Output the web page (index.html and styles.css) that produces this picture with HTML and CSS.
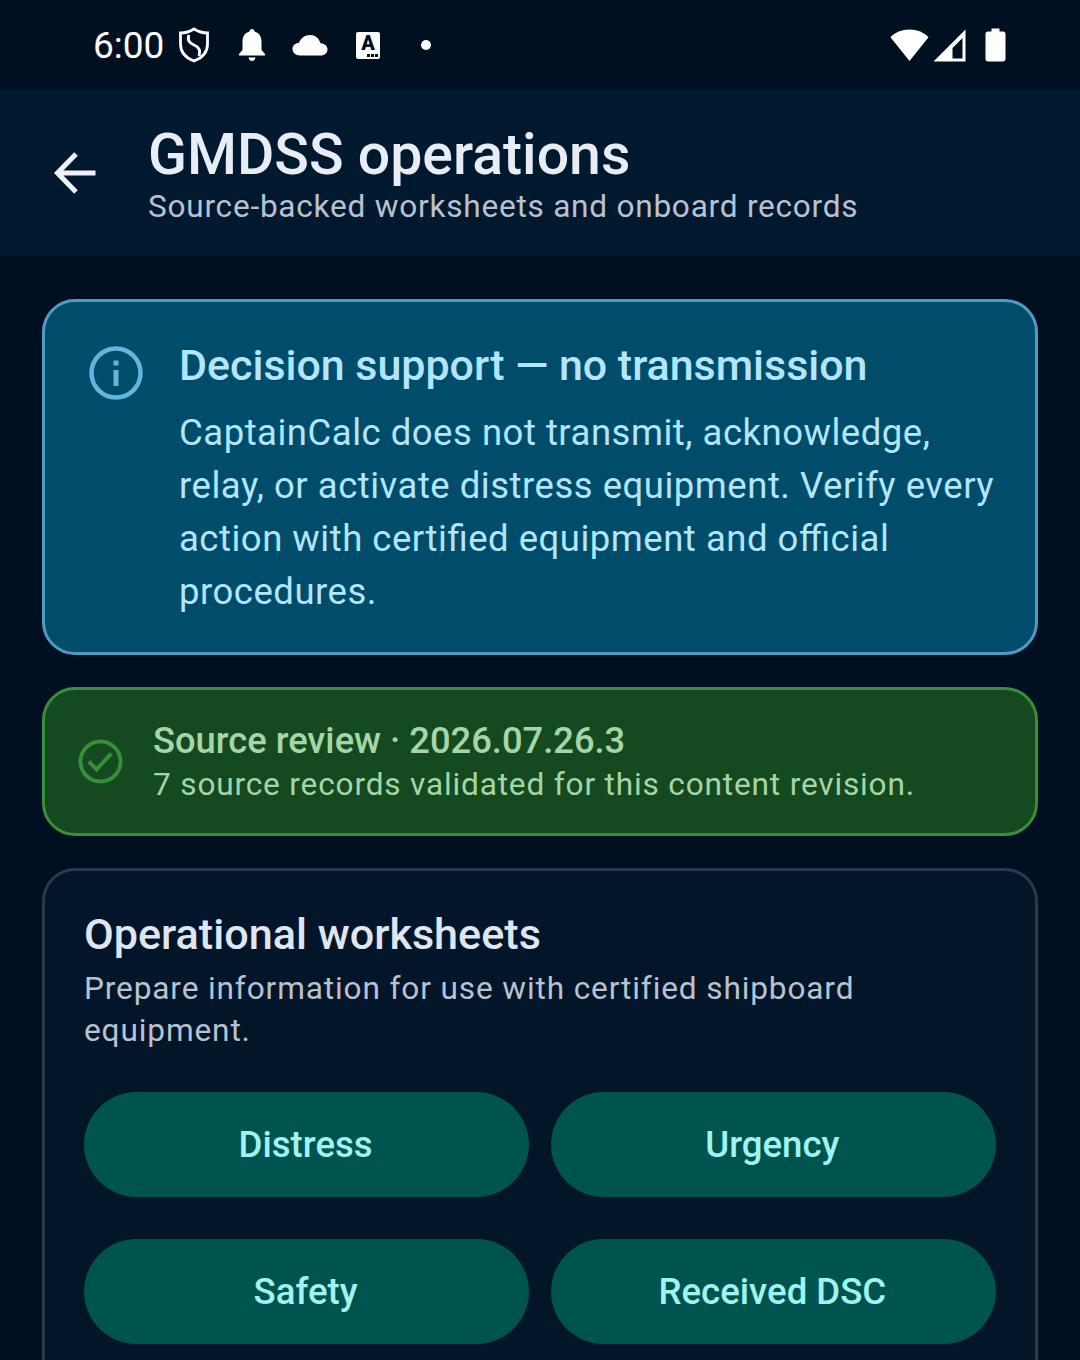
FILE: index.html
```html
<!DOCTYPE html>
<html lang="en">
<head>
    <meta charset="UTF-8">
    <meta name="viewport" content="width=device-width, initial-scale=1">
    <title>GMDSS operations</title>
    <link rel="stylesheet" href="styles.css">
</head>
<body>
    <div id="root">
        <div class="status-bar">
            <div class="status-left">
                <span class="clock">6:00</span>
                <svg class="ic-shield" width="30" height="36" viewBox="0 0 30 36">
                    <path d="M15 2 C19 4.500 23 6 28.500 6 V17 C28.500 25 23 31 15 34 C7 31 1.500 25 1.500 17 V6 C7 6 11 4.500 15 2 Z" fill="none" stroke="#fff" stroke-width="2.800"/>
                    <path d="M10 8 C8 13 10 16 15 18 C20 20 22 23 20 29" fill="none" stroke="#fff" stroke-width="2.800"/>
                </svg>
                <svg class="ic-bell" width="28" height="34" viewBox="0 0 28 34">
                    <path d="M14 1 C15.500 1 16.500 2 16.500 3.600 C21.500 5 23.500 9 23.500 14 V22 L27 26 V27.500 H1 V26 L4.500 22 V14 C4.500 9 6.500 5 11.500 3.600 C11.500 2 12.500 1 14 1 Z" fill="#fff"/>
                    <path d="M10.500 29.500 H17.500 C17 32 15.500 33 14 33 C12.500 33 11 32 10.500 29.500 Z" fill="#fff"/>
                </svg>
                <svg class="ic-cloud" width="36" height="22" viewBox="0 0 36 22">
                    <path d="M8 21.500 C3.500 21.500 0.500 18.500 0.500 15 C0.500 11.500 3.500 9 7 8.800 C9 4 13 1 18 1 C23 1 27 4 28.500 9.300 C32.500 9.500 35.500 12 35.500 15.500 C35.500 19 32.500 21.500 29 21.500 Z" fill="#fff"/>
                </svg>
                <span class="ic-a">
                    <span class="ic-a-letter">A</span>
                    <span class="ic-a-dots"><i></i><i></i><i></i></span>
                </span>
                <span class="dot"></span>
            </div>
            <div class="status-right">
                <svg class="ic-wifi" width="39" height="34" viewBox="0 0 40 34">
                    <path d="M0.500 9 C5 4 12 1 20 1 C28 1 35 4 39.500 9 L20 33.500 Z" fill="#fff"/>
                </svg>
                <svg width="33" height="33" viewBox="0 0 33 33">
                    <path fill-rule="evenodd" d="M32.500 0.500 V32.500 H0.500 Z M29.500 9 L19.500 19 V29.500 H29.500 Z" fill="#fff"/>
                </svg>
                <svg class="ic-battery" width="21" height="34" viewBox="0 0 21 34">
                    <path d="M6.500 0.500 H14.500 V3.500 H18 C19.500 3.500 20.500 4.500 20.500 6 V31 C20.500 32.500 19.500 33.500 18 33.500 H3 C1.500 33.500 0.500 32.500 0.500 31 V6 C0.500 4.500 1.500 3.500 3 3.500 H6.500 Z" fill="#fff"/>
                </svg>
            </div>
        </div>

        <header class="app-bar">
            <svg class="back" width="44" height="42" viewBox="0 0 44 42">
                <path d="M42.500 21 H4.500 M23 2 L4.500 21 L23 40" fill="none" stroke="#eef2fa" stroke-width="5"/>
            </svg>
            <div class="app-bar-text">
                <h1>GMDSS operations</h1>
                <p>Source-backed worksheets and onboard records</p>
            </div>
        </header>

        <main class="content">
            <section class="card notice">
                <svg class="ic-info" width="54" height="54" viewBox="0 0 54 54">
                    <circle cx="27" cy="27" r="24.500" fill="none" stroke="#62b5de" stroke-width="4.500"/>
                    <rect x="24.500" y="14.500" width="5" height="5" fill="#62b5de"/>
                    <rect x="24.500" y="24" width="5" height="16" fill="#62b5de"/>
                </svg>
                <div>
                    <h2>Decision support — no transmission</h2>
                    <p>CaptainCalc does not transmit, acknowledge, relay, or activate distress equipment. Verify every action with certified equipment and official procedures.</p>
                </div>
            </section>

            <section class="card review">
                <svg class="ic-check" width="45" height="45" viewBox="0 0 46 46">
                    <circle cx="23" cy="23" r="20.500" fill="none" stroke="#388e3c" stroke-width="4"/>
                    <path d="M11 23 L19 31 L34 15" fill="none" stroke="#388e3c" stroke-width="4"/>
                </svg>
                <div>
                    <h3>Source review · 2026.07.26.3</h3>
                    <p>7 source records validated for this content revision.</p>
                </div>
            </section>

            <section class="card worksheets">
                <h2>Operational worksheets</h2>
                <p>Prepare information for use with certified shipboard equipment.</p>
                <div class="btn-grid">
                    <button>Distress</button>
                    <button>Urgency</button>
                    <button>Safety</button>
                    <button>Received DSC</button>
                </div>
            </section>
        </main>
    </div>
</body>
</html>
```

FILE: styles.css
```css
* {
    margin: 0;
    padding: 0;
    box-sizing: border-box;
}

html {
    font-family: Roboto, sans-serif;
}

body {
    background-color: #001021;
}

#root {
    width: 1080px;
    height: 1360px;
    overflow: hidden;
}

.status-bar {
    display: flex;
    justify-content: space-between;
    align-items: center;
    height: 90px;
    padding: 0 74px 0 93px;
    color: white;
}

.status-left {
    display: flex;
    align-items: center;
}

.clock {
    font-size: 37px;
    width: 86px;
}

.ic-shield {
    margin-right: 29px;
}

.ic-bell {
    margin-right: 26px;
}

.ic-cloud {
    margin-right: 28px;
}

.ic-a {
    display: flex;
    flex-direction: column;
    align-items: center;
    width: 24px;
    height: 27px;
    margin-right: 41px;
    background-color: white;
    border-radius: 2px;
    color: #001021;
    font-size: 20px;
    font-weight: 900;
}

.ic-a-letter {
    height: 19px;
    margin-top: 2px;
    line-height: 19px;
}

.ic-a-dots {
    display: flex;
    gap: 1px;
    align-self: flex-end;
    margin: 1px 2px 0 0;
}

.ic-a-dots i {
    width: 3px;
    height: 3px;
    background-color: #001021;
}

.dot {
    width: 10px;
    height: 10px;
    border-radius: 50%;
    background-color: white;
}

.status-right {
    display: flex;
    align-items: center;
    gap: 4px;
}

.ic-battery {
    margin-left: 15px;
}

.app-bar {
    display: flex;
    align-items: center;
    height: 166px;
    padding-left: 53px;
    background-color: #01192f;
}

.back {
    margin-right: 51px;
}

.app-bar-text {
    padding-top: 2px;
}

h1 {
    font-size: 57.200px;
    font-weight: 500;
    line-height: 66px;
    color: #e8ecf4;
}

.app-bar-text p {
    font-size: 31.600px;
    line-height: 38px;
    letter-spacing: 0.75px;
    color: #b8c2d0;
}

.content {
    display: flex;
    flex-direction: column;
    gap: 32px;
    padding: 43px 42px 0;
}

.card {
    border: 3px solid;
    border-radius: 33px;
}

.notice {
    display: flex;
    align-items: flex-start;
    gap: 36px;
    height: 356px;
    padding: 39px 40px 0 44px;
    background-color: #004d6b;
    border-color: #4f9bc4;
}

.ic-info {
    flex-shrink: 0;
    margin-top: 5px;
}

.notice h2 {
    font-size: 42.950px;
    font-weight: 500;
    line-height: 48px;
    color: #b3e5fc;
}

.notice p {
    margin-top: 17px;
    font-size: 36.500px;
    line-height: 53px;
    letter-spacing: 0.51px;
    font-feature-settings: "liga" 1;
    color: #b3e5fc;
}

.review {
    display: flex;
    align-items: center;
    gap: 30px;
    height: 149px;
    padding-left: 33px;
    background-color: #154a21;
    border-color: #388e3c;
}

.ic-check {
    flex-shrink: 0;
}

.review h3 {
    font-size: 36.300px;
    font-weight: 500;
    line-height: 46px;
    color: #a5d6a7;
}

.review p {
    font-size: 31.600px;
    line-height: 42px;
    letter-spacing: 0.83px;
    color: #a5d6a7;
}

.worksheets {
    padding: 38px 39px 0;
    height: 600px;
    background-color: #031528;
    border-color: #2a3a4e;
}

.worksheets h2 {
    font-size: 43.150px;
    font-weight: 500;
    line-height: 52px;
    color: #dfe6f0;
}

.worksheets p {
    margin-top: 7px;
    font-size: 31.600px;
    line-height: 42px;
    letter-spacing: 0.87px;
    color: #b8c2d0;
}

.btn-grid {
    display: grid;
    grid-template-columns: 1fr 1fr;
    gap: 42px 21.500px;
    margin-top: 40px;
}

button {
    height: 105px;
    padding-right: 2px;
    border: none;
    border-radius: 53px;
    background-color: #005450;
    color: #a0f3ee;
    font-family: Roboto, sans-serif;
    font-size: 36.600px;
    font-weight: 500;
}
```
